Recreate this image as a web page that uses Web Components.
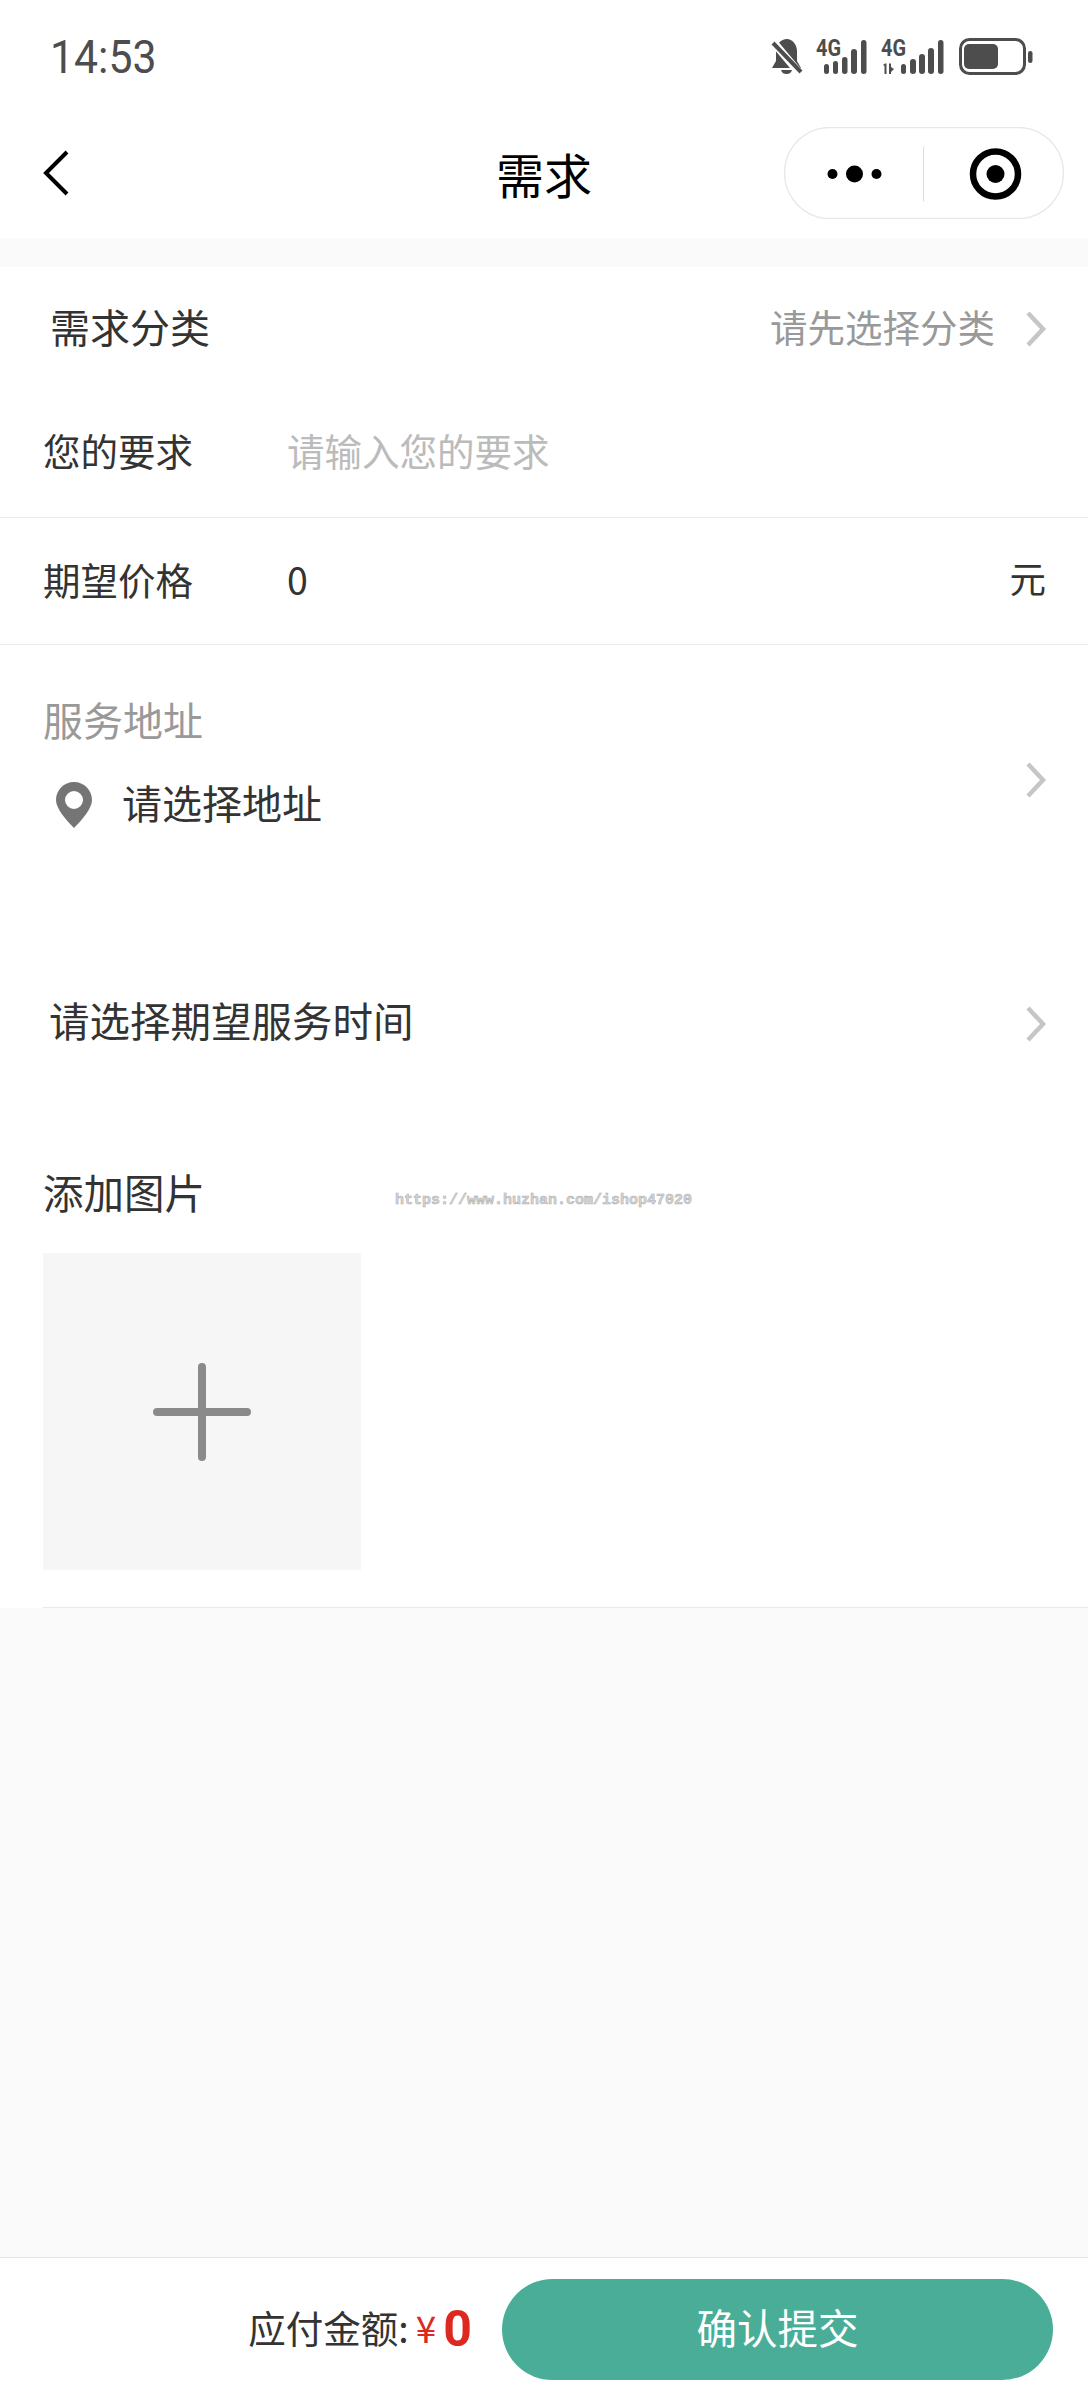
<!DOCTYPE html>
<html lang="zh-CN"><head><meta charset="utf-8"><title>需求</title>
<style>
html,body{margin:0;padding:0;background:#fafafa}
body{font-family:"Noto Sans CJK SC","Noto Sans",sans-serif;color:#333}
x-app{width:1088px;height:2400px}
</style></head><body>
<x-app>
  <x-status-bar time="14:53"></x-status-bar>
  <x-nav-bar>需求</x-nav-bar>
  <x-select-row h="120" inset="50" fs="40" hint="请先选择分类">需求分类</x-select-row>
  <x-input-row h="131" label="您的要求" placeholder="请输入您的要求"></x-input-row>
  <x-input-row h="127" label="期望价格" value="0" unit="元"></x-input-row>
  <x-address-row label="服务地址">请选择地址</x-address-row>
  <x-select-row h="212" inset="49" fs="40.500" pad="6">请选择期望服务时间</x-select-row>
  <x-upload-block label="添加图片" mark="https://www.huzhan.com/ishop47020"></x-upload-block>
  <x-pay-bar label="应付金额:" amount="0">确认提交</x-pay-bar>
</x-app>
<script>
function def(name, css, html, extra){
  customElements.define(name, class extends HTMLElement{
    connectedCallback(){
      if(this.shadowRoot) return;
      const r=this.attachShadow({mode:'open'});
      const a=n=>this.getAttribute(n)||'';
      r.innerHTML='<style>'+css+'</style>'+html(a,this);
      if(extra) extra(r,a,this);
    }
  });
}
const chev=`<svg width="22" height="38" viewBox="0 0 22 38" style="display:block;flex:none;margin-top:4px"><path d="M3 3 L18 19 L3 35" fill="none" stroke="#c6c6c6" stroke-width="4.500"/></svg>`;

def('x-app',`:host{display:flex;flex-direction:column;background:#fafafa;overflow:hidden}
 ::slotted(x-pay-bar){margin-top:auto}`,()=>`<slot></slot>`);

def('x-status-bar',`:host{display:flex;align-items:center;justify-content:space-between;height:108px;padding:6px 55px 0 50px;box-sizing:border-box;background:#fff;flex:none}
 .t{font:400 46px/1 Roboto,sans-serif;color:#4d4d4d;transform:scaleX(.93);transform-origin:left center}
 svg{display:block}
 text{font:700 23px "Roboto",sans-serif;fill:#4d4d4d}`,
 a=>`<div class="t">${a('time')}</div>
 <svg width="264" height="44" viewBox="770 34 264 44" aria-hidden="true" fill="#4d4d4d">
  <path d="M788 38c-6 0-11 5-11 12v10l-4 7h29l-4-7V50c0-7-5-12-10-12z"/>
  <path d="M771 37 L802 74" stroke="#fff" stroke-width="8"/>
  <path d="M774 42 L802 71" stroke="#4d4d4d" stroke-width="4"/>
  <path d="M782 69h11c-1 3-3 4-5.500 4s-4.500-1-5.500-4z"/>
  <text x="817" y="55" textLength="25" lengthAdjust="spacingAndGlyphs">4G</text>
  <g><rect x="825" y="63" width="5" height="10" rx="2.500"/><rect x="834" y="60" width="5" height="13" rx="2.500"/><rect x="843" y="56" width="5.500" height="17" rx="2.700"/><rect x="852" y="48" width="6" height="25" rx="3"/><rect x="862" y="39" width="5.500" height="34" rx="2.700"/></g>
  <text x="882" y="55" textLength="25" lengthAdjust="spacingAndGlyphs">4G</text>
  <path d="M884 64l2-1.500h1.500V73h-2v-8zM890 62.500h2V73h-2zM892 66l3 2-3 3z"/>
  <g><rect x="902" y="63" width="5" height="10" rx="2.500"/><rect x="911" y="58" width="6" height="15" rx="3"/><rect x="920" y="53" width="6" height="20" rx="3"/><rect x="929" y="47" width="6" height="26" rx="3"/><rect x="939" y="39" width="5.500" height="34" rx="2.700"/></g>
  <rect x="961.500" y="38.500" width="64" height="34" rx="9" fill="none" stroke="#4d4d4d" stroke-width="3"/>
  <rect x="965" y="43" width="34" height="25" rx="5"/>
  <rect x="1029" y="50" width="4.500" height="12" rx="2.200"/>
 </svg>`);

def('x-nav-bar',`:host{display:grid;grid-template-columns:1fr auto 1fr;align-items:center;height:130px;background:#fff;flex:none;margin-bottom:29px}
 .l{padding-left:43px}
 .title{font-size:48px;line-height:1;color:#000;padding-bottom:1px}
 .r{justify-self:end;margin-right:24px}
 svg{display:block}`,
 ()=>`<div class="l"><svg width="28" height="48" viewBox="0 0 28 48"><path d="M24 3 L3 24 L24 45" fill="none" stroke="#000" stroke-width="4"/></svg></div>
 <div class="title"><slot></slot></div>
 <div class="r"><svg width="280" height="92" viewBox="784.500 126.500 280 92">
  <rect x="785" y="127" width="279" height="91" rx="45.500" fill="#fff" stroke="#e8e8e8" stroke-width="1.500"/>
  <rect x="923.500" y="146" width="1" height="55" fill="#ddd"/>
  <circle cx="833" cy="173.500" r="5" /><circle cx="855" cy="173.500" r="8.500"/><circle cx="877" cy="173.500" r="5"/>
  <circle cx="996" cy="173.500" r="22.500" fill="none" stroke="#000" stroke-width="6.500"/><circle cx="996" cy="173.500" r="9"/>
 </svg></div>`);

def('x-select-row',`:host{display:flex;align-items:center;background:#fff;flex:none;box-sizing:border-box}
 .l{line-height:1;color:#333;flex:1;margin-bottom:3px}
 .h{font-size:37.500px;line-height:1;color:#999;margin:0 30px 3px 0}`,
 a=>`<div class="l" style="font-size:${a('fs')}px"><slot></slot></div>${a('hint')?`<div class="h">${a('hint')}</div>`:''}${chev}`,
 (r,a,el)=>{el.style.height=a('h')+'px';el.style.padding=`${a('pad')||0}px 41px 0 ${a('inset')}px`;});

def('x-input-row',`:host{display:flex;align-items:center;background:#fff;flex:none;box-sizing:border-box;padding:0 42px 0 43px;border-bottom:1px solid #e9e9e9}
 .l{font-size:37.500px;line-height:1;color:#333;width:244px;flex:none;margin-bottom:5px}
 .v{font-size:37.500px;line-height:1;color:#333;flex:1;margin-bottom:5px}
 .p{color:#bbb}
 .u{font-size:36.500px;line-height:1;color:#333;margin-bottom:5px}`,
 a=>`<div class="l">${a('label')}</div>
 <div class="v ${a('placeholder')?'p':''}">${a('placeholder')||a('value')}</div>
 ${a('unit')?`<div class="u">${a('unit')}</div>`:''}`,
 (r,a,el)=>{el.style.height=a('h')+'px';});

def('x-address-row',`:host{display:flex;align-items:flex-start;justify-content:space-between;height:268px;background:#fff;flex:none;box-sizing:border-box;padding:54px 41px 0 43px}
 .l{font-size:40px;line-height:1;color:#999}
 .a{display:flex;align-items:center;margin-top:42.500px;margin-left:13px;font-size:40px;line-height:1;color:#333;gap:30px}
 .a span{margin-bottom:6px}
 svg{display:block;flex:none}
 .c{margin-top:58px}`,
 a=>`<div><div class="l">${a('label')}</div>
 <div class="a"><svg width="36" height="46" viewBox="0 0 36 46"><path fill-rule="evenodd" fill="#757575" d="M18 0C8 0 0 8 0 18c0 8 9 19 18 28 9-9 18-20 18-28C36 8 28 0 18 0zm0 9a9 9 0 1 1 0 18 9 9 0 0 1 0-18z"/></svg><span><slot></slot></span></div></div>
 <div class="c">${chev}</div>`);

def('x-upload-block',`:host{display:block;background:#fff;flex:none;height:483px;box-sizing:border-box;position:relative;padding:47px 0 0 43px}
 .top{display:flex;align-items:flex-end;height:40px}
 .l{font-size:40.500px;line-height:40px;color:#333;width:352px;flex:none}
 .m{font:700 15px/1 "Liberation Mono",monospace;color:#d6d6d6;-webkit-text-stroke:.5px #aaa;width:297px;white-space:nowrap;position:relative;top:-4px}
 .box{width:318px;height:317px;margin-top:41px;background:#f6f6f6;display:flex;align-items:center;justify-content:center}
 .line{position:absolute;left:43px;right:0;bottom:0;height:1px;background:#e9e9e9}
 svg{display:block}`,
 a=>`<div class="top"><div class="l">${a('label')}</div><div class="m">${a('mark')}</div></div>
 <div class="box"><svg width="98" height="98" viewBox="0 0 98 98"><path d="M49 4V94M4 49H94" stroke="#8a8a8a" stroke-width="8" stroke-linecap="round"/></svg></div>
 <div class="line"></div>`);

def('x-pay-bar',`:host{display:flex;align-items:center;justify-content:flex-end;height:143px;background:#fff;border-top:1px solid #e4e4e4;box-sizing:border-box;flex:none;padding:0 35px 0 0}
 .t{font-size:37.500px;line-height:1;color:#333;white-space:nowrap;margin-bottom:5px}
 .y{font-size:37px;line-height:1;color:#dc2a20;margin:0 0 3px 7px}
 .n{font:700 50px/1 Roboto,sans-serif;color:#dc2a20;margin:0 30px 0 7px}
 .b{width:551px;height:101px;border-radius:50.500px;background:#4aad98;color:#fff;font-size:40.500px;line-height:1;display:flex;align-items:center;justify-content:center;box-sizing:border-box;padding-bottom:3px}`,
 a=>`<div class="t">${a('label')}</div><div class="y">¥</div><div class="n">${a('amount')}</div><div class="b"><slot></slot></div>`);
</script>
</body></html>
